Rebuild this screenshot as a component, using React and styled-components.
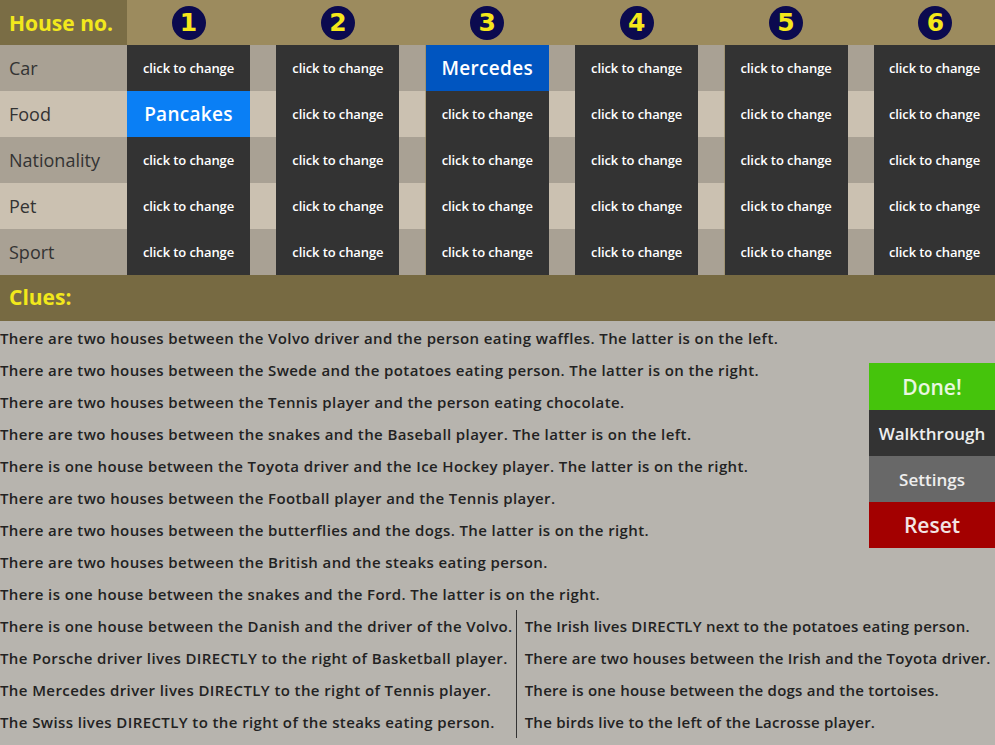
import React from "react";
import styled, { createGlobalStyle } from "styled-components";

const GlobalStyle = createGlobalStyle`
  html, body {
    margin: 0;
    padding: 0;
    background: #b7b4ae;
  }
  body {
    font-family: "Open Sans", "DejaVu Sans", sans-serif;
  }
`;

const categories = ["Car", "Food", "Nationality", "Pet", "Sport"];

const filled = {
  "Car-3": { text: "Mercedes", color: "#0055c0" },
  "Food-1": { text: "Pancakes", color: "#0a7ff5" },
};

const clues = [
  "There are two houses between the Volvo driver and the person eating waffles. The latter is on the left.",
  "There are two houses between the Swede and the potatoes eating person. The latter is on the right.",
  "There are two houses between the Tennis player and the person eating chocolate.",
  "There are two houses between the snakes and the Baseball player. The latter is on the left.",
  "There is one house between the Toyota driver and the Ice Hockey player. The latter is on the right.",
  "There are two houses between the Football player and the Tennis player.",
  "There are two houses between the butterflies and the dogs. The latter is on the right.",
  "There are two houses between the British and the steaks eating person.",
  "There is one house between the snakes and the Ford. The latter is on the right.",
];

const pairs = [
  [
    "There is one house between the Danish and the driver of the Volvo.",
    "The Irish lives DIRECTLY next to the potatoes eating person.",
  ],
  [
    "The Porsche driver lives DIRECTLY to the right of Basketball player.",
    "There are two houses between the Irish and the Toyota driver.",
  ],
  [
    "The Mercedes driver lives DIRECTLY to the right of Tennis player.",
    "There is one house between the dogs and the tortoises.",
  ],
  [
    "The Swiss lives DIRECTLY to the right of the steaks eating person.",
    "The birds live to the left of the Lacrosse player.",
  ],
];

const App = () => {
  return (
    <Page>
      <GlobalStyle />
      <Board>
        <HeadLabel>House no.</HeadLabel>
        {[1, 2, 3, 4, 5, 6].map((n) => (
          <HeadCell key={n} last={n === 6}>
            <Badge>{n}</Badge>
          </HeadCell>
        ))}
        {categories.map((cat, r) => (
          <Row key={cat} light={r % 2 === 1}>
            <RowLabel>{cat}</RowLabel>
            {[1, 2, 3, 4, 5, 6].map((n) => {
              const f = filled[`${cat}-${n}`];
              return (
                <Cell key={n} bg={f ? f.color : "#333333"} big={!!f}>
                  {f ? f.text : "click to change"}
                </Cell>
              );
            })}
          </Row>
        ))}
      </Board>
      <CluesBar>Clues:</CluesBar>
      <ClueArea>
        <ClueList>
          {clues.map((c) => (
            <Clue key={c}>{c}</Clue>
          ))}
        </ClueList>
        <Buttons>
          <ActionButton bg="#45c40c" color="#e9f7e0" size="21px">
            Done!
          </ActionButton>
          <ActionButton bg="#333333" color="#eeeeee" size="17px">
            Walkthrough
          </ActionButton>
          <ActionButton bg="#686868" color="#eeeeee" size="17px">
            Settings
          </ActionButton>
          <ActionButton bg="#a30000" color="#f3e4e4" size="21px">
            Reset
          </ActionButton>
        </Buttons>
      </ClueArea>
      <PairTable>
        {pairs.map(([a, b]) => (
          <React.Fragment key={a}>
            <LeftClue>{a}</LeftClue>
            <RightClue>{b}</RightClue>
          </React.Fragment>
        ))}
      </PairTable>
    </Page>
  );
};

const Page = styled.div`
  width: 995px;
  height: 745px;
  overflow: hidden;
  background: #b7b4ae;
`;

const Board = styled.div`
  display: grid;
  grid-template-columns: 127px repeat(5, 123px 26.4px) 121px;
  grid-template-rows: 45px repeat(5, 46px);
  background: #9c8b5e;
`;

const HeadLabel = styled.div`
  background: #7a6d45;
  color: #f2e81c;
  font-size: 21px;
  font-weight: 700;
  display: flex;
  align-items: center;
  padding-left: 9px;
  padding-top: 1px;
`;

const HeadCell = styled.div`
  grid-column: span ${(p) => (p.last ? 1 : 2)};
  width: 123px;
  display: flex;
  align-items: center;
  justify-content: center;
`;

const Badge = styled.div`
  width: 34px;
  height: 34px;
  border-radius: 50%;
  background: #0b0a4f;
  color: #f5e71a;
  font-family: "DejaVu Sans", sans-serif;
  font-size: 25px;
  font-weight: 700;
  display: flex;
  align-items: center;
  justify-content: center;
  line-height: 1;
`;

const Row = styled.div`
  display: contents;
  --stripe: ${(p) => (p.light ? "#cbc1b1" : "#a9a194")};
`;

const RowLabel = styled.div`
  background: var(--stripe);
  color: #333;
  font-size: 18px;
  display: flex;
  align-items: center;
  padding-left: 9px;
`;

const Cell = styled.div`
  background: ${(p) => p.bg};
  color: #ffffff;
  font-size: ${(p) => (p.big ? "19px" : "13px")};
  font-weight: 600;
  letter-spacing: ${(p) => (p.big ? "0.3px" : "-0.1px")};
  display: flex;
  align-items: center;
  justify-content: center;
  &:not(:last-child) {
    grid-column: span 2;
    margin-right: 26.4px;
    box-shadow: 26.4px 0 0 var(--stripe);
  }
`;

const CluesBar = styled.div`
  height: 46px;
  background: #776a42;
  color: #f2e81c;
  font-size: 21px;
  font-weight: 700;
  display: flex;
  align-items: center;
  padding-left: 9px;
  padding-bottom: 2px;
  box-sizing: border-box;
`;

const ClueArea = styled.div`
  display: flex;
  justify-content: space-between;
  padding-top: 1px;
`;

const ClueList = styled.div`
  display: flex;
  flex-direction: column;
`;

const Clue = styled.div`
  height: 32px;
  line-height: 32px;
  font-size: 15px;
  font-weight: 600;
  color: #222;
  white-space: nowrap;
  letter-spacing: 0.4px;
`;

const Buttons = styled.div`
  width: 126px;
  margin-top: 41px;
  display: flex;
  flex-direction: column;
  align-self: flex-start;
`;

const ActionButton = styled.div`
  height: 46px;
  background: ${(p) => p.bg};
  color: ${(p) => p.color};
  font-size: ${(p) => p.size};
  font-weight: 600;
  display: flex;
  align-items: center;
  justify-content: center;
  cursor: pointer;
  &:first-child {
    height: 47px;
  }
`;

const PairTable = styled.div`
  display: grid;
  grid-template-columns: max-content 1fr;
`;

const LeftClue = styled(Clue)`
  padding-right: 3px;
  border-right: 1px solid #333;
`;

const RightClue = styled(Clue)`
  padding-left: 8px;
  letter-spacing: 0.25px;
`;

export default App;
